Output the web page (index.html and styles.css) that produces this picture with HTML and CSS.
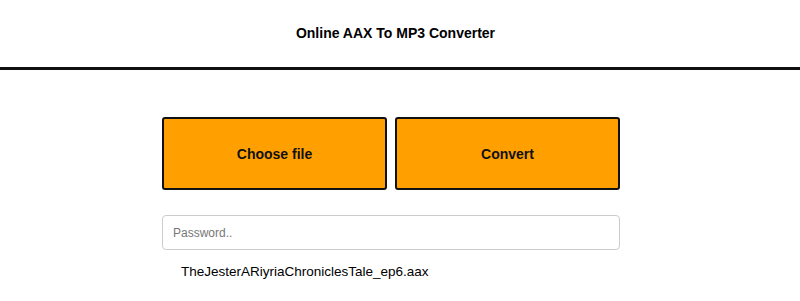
FILE: index.html
```html
<!DOCTYPE html>
<html>
  <head>
    <meta charset="utf-8" />
    <title>Online AAX To MP3 Converter</title>
    <link rel="stylesheet" href="styles.css">
  </head>
  <body>
    <header class="header">
      <h1 class="title">Online AAX To MP3 Converter</h1>
    </header>
    <div class="page">
      <main class="main">
        <div class="actions">
          <button class="btn">Choose file</button>
          <button class="btn">Convert</button>
        </div>
        <input class="password" type="password" placeholder="Password..">
        <div class="filename">TheJesterARiyriaChroniclesTale_ep6.aax</div>
      </main>
    </div>
  </body>
</html>
```

FILE: styles.css
```css
body {
  margin: 0;
  font-family: "Liberation Sans", Arial, sans-serif;
  background: #fff;
  color: #000;
}
.header {
  padding: 24px 0 25px;
  border-bottom: 3px solid #111;
  text-align: center;
}
.title {
  margin: 0 9px 0 0;
  font-size: 14px;
  line-height: 18px;
  font-weight: bold;
}
.page {
  width: 782px;
}
.main {
  width: 458px;
  margin: 47px auto 0;
  display: flex;
  flex-direction: column;
}
.actions {
  display: flex;
  gap: 8px;
}
.btn {
  flex: 1;
  height: 73px;
  background: #ffa000;
  border: 2px solid #111;
  border-radius: 3px;
  font-family: "Liberation Sans", Arial, sans-serif;
  font-size: 14px;
  font-weight: bold;
  color: #111;
}
.password {
  margin-top: 25px;
  height: 35px;
  box-sizing: border-box;
  padding: 0 10px;
  border: 1px solid #ccc;
  border-radius: 4px;
  font-family: "Liberation Sans", Arial, sans-serif;
  font-size: 12px;
}
.password::placeholder {
  color: #777;
}
.filename {
  margin-top: 14px;
  padding-left: 19px;
  font-size: 13.5px;
  line-height: 16px;
}
```
